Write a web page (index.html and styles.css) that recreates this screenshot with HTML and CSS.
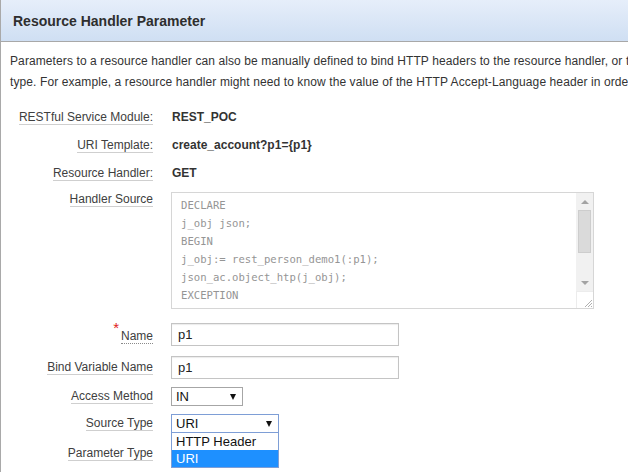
FILE: index.html
```html
<!DOCTYPE html>
<html>
<head>
<meta charset="utf-8">
<link rel="stylesheet" href="styles.css">
</head>
<body>
<div class="panel">
  <div class="hdr"><h2 class="title">Resource Handler Parameter</h2></div>
  <p class="intro"><span class="line">Parameters to a resource handler can also be manually defined to bind HTTP headers to the resource handler, or to bind a parameter of the URI template.</span><span class="line">type. For example, a resource handler might need to know the value of the HTTP Accept-Language header in order to localize the content it returns.</span></p>
  <div class="form">
    <div class="row">
      <div class="lbl"><span class="lt">RESTful Service Module:</span></div>
      <div class="val">REST_POC</div>
    </div>
    <div class="row">
      <div class="lbl"><span class="lt">URI Template:</span></div>
      <div class="val">create_account?p1={p1}</div>
    </div>
    <div class="row">
      <div class="lbl"><span class="lt">Resource Handler:</span></div>
      <div class="val">GET</div>
    </div>
    <div class="row row-top">
      <div class="lbl"><span class="lt">Handler Source</span></div>
      <div class="code">
        <div class="code-text">DECLARE
j_obj json;
BEGIN
j_obj:= rest_person_demo1(:p1);
json_ac.object_htp(j_obj);
EXCEPTION</div>
        <div class="sbar">
          <div class="sbtn"><span class="tri-up"></span></div>
          <div class="strack"><div class="thumb"></div></div>
          <div class="sbtn"><span class="tri-down"></span></div>
          <div class="corner">
            <svg width="17" height="17" viewBox="0 0 17 17"><path d="M8 15 L15 8 M11 15 L15 11 M14 15 L15 14" stroke="#b0b0b0" stroke-width="1"/></svg>
          </div>
        </div>
      </div>
    </div>
    <div class="row row-in first-in">
      <div class="lbl"><span class="req">*</span><span class="lt dotted">Name</span></div>
      <div class="input">p1</div>
    </div>
    <div class="row row-in bind">
      <div class="lbl"><span class="lt">Bind Variable Name</span></div>
      <div class="input">p1</div>
    </div>
    <div class="row row-sel">
      <div class="lbl"><span class="lt">Access Method</span></div>
      <div class="select sel-access"><span>IN</span><span class="arrow"></span></div>
    </div>
    <div class="row row-sel">
      <div class="lbl"><span class="lt">Source Type</span></div>
      <div class="sel-wrap">
        <div class="select sel-source"><span>URI</span><span class="arrow"></span></div>
        <div class="dropdown">
          <div class="opt">HTTP Header</div>
          <div class="opt opt-sel">URI</div>
        </div>
      </div>
    </div>
    <div class="row row-last">
      <div class="lbl"><span class="lt">Parameter Type</span></div>
    </div>
  </div>
</div>
</body>
</html>
```

FILE: styles.css
```css
html, body {
  margin: 0;
  padding: 0;
  background: #fff;
  overflow: hidden;
}
body {
  font-family: "Liberation Sans", Arial, sans-serif;
  color: #333;
}
.panel {
  border-left: 1px solid #a9a9a9;
  min-height: 472px;
  width: 1100px;
}
.hdr {
  height: 41px;
  border-bottom: 1px solid #a8a8a8;
  background: linear-gradient(#e6eefa, #cfdff3);
  display: flex;
  align-items: center;
}
.title {
  margin: 0 0 0 12px;
  font-size: 14px;
  font-weight: bold;
  color: #2e2e2e;
}
.intro {
  margin: 0;
  padding: 9px 0 0 9px;
  font-size: 12px;
  line-height: 21px;
  letter-spacing: 0.1px;
  color: #333;
}
.intro .line {
  display: block;
  white-space: nowrap;
}
.form {
  padding-top: 10px;
}
.row {
  display: flex;
  align-items: center;
  min-height: 28px;
}
.lbl {
  width: 152px;
  flex: none;
  margin-right: 18px;
  text-align: right;
  font-size: 12px;
  color: #404040;
}
.lt {
  display: inline-block;
  line-height: 14px;
  border-bottom: 1px solid #cfcfcf;
}
.lt.dotted {
  border-bottom: 1px dotted #8a8a8a;
}
.req {
  color: #e02020;
  font-size: 15px;
  position: relative;
  top: -7px;
  margin-right: 2px;
}
.val {
  font-size: 12px;
  font-weight: bold;
  color: #333;
  padding-left: 1px;
}
.row-top {
  align-items: flex-start;
  padding-top: 5px;
}
.code {
  display: flex;
  width: 421px;
  height: 115px;
  border: 1px solid #d6d6d6;
}
.code-text {
  flex: 1;
  padding: 3px 0 0 9px;
  font-family: "DejaVu Sans Mono", "Liberation Mono", monospace;
  font-size: 10.6px;
  line-height: 18px;
  color: #959595;
  white-space: pre;
  overflow: hidden;
}
.sbar {
  width: 17px;
  display: flex;
  flex-direction: column;
  background: #f1f1f1;
}
.sbtn {
  height: 17px;
  display: flex;
  align-items: center;
  justify-content: center;
}
.tri-up {
  width: 0;
  height: 0;
  border-left: 4px solid transparent;
  border-right: 4px solid transparent;
  border-bottom: 4px solid #a3a3a3;
}
.tri-down {
  width: 0;
  height: 0;
  border-left: 4px solid transparent;
  border-right: 4px solid transparent;
  border-top: 4px solid #a3a3a3;
}
.strack {
  flex: 1;
  padding: 0 2px;
}
.thumb {
  height: 43px;
  background: #dadada;
  border: 1px solid #cdcdcd;
  box-sizing: border-box;
}
.corner {
  height: 17px;
  background: #fff;
  border-top: 1px solid #ececec;
  border-left: 1px solid #ececec;
  box-sizing: border-box;
}
.corner svg {
  display: block;
}
.row-in {
  min-height: 0;
}
.first-in {
  margin-top: 14px;
}
.bind {
  margin-top: 10px;
}
.input {
  box-sizing: border-box;
  width: 228px;
  height: 23px;
  border: 1px solid #c4c4c4;
  box-shadow: inset 0 1px 1px #ececec;
  padding: 0 6px;
  font-size: 13px;
  line-height: 21px;
  color: #222;
}
.row-sel {
  min-height: 0;
  margin-top: 8px;
}
.select {
  box-sizing: border-box;
  height: 19px;
  border: 1px solid #a6a6a6;
  display: flex;
  align-items: center;
  justify-content: space-between;
  padding: 0 4px;
  font-size: 13px;
  color: #111;
  background: #fff;
}
.sel-access {
  width: 72px;
}
.sel-source {
  width: 108px;
  border-color: #7e9ed6;
}
.arrow {
  width: 0;
  height: 0;
  border-left: 3.5px solid transparent;
  border-right: 3.5px solid transparent;
  border-top: 6px solid #111;
  margin-right: 2px;
}
.sel-wrap {
  position: relative;
}
.dropdown {
  position: absolute;
  left: 0;
  top: 19px;
  width: 108px;
  box-sizing: border-box;
  border: 1px solid #7e9ed6;
  border-top: none;
  background: #fff;
  z-index: 2;
}
.opt {
  height: 17px;
  line-height: 17px;
  padding-left: 4px;
  font-size: 13px;
  color: #111;
}
.opt-sel {
  background: #1e90ff;
  color: #fff;
}
.row-last {
  margin-top: 8px;
  min-height: 24px;
}
```
